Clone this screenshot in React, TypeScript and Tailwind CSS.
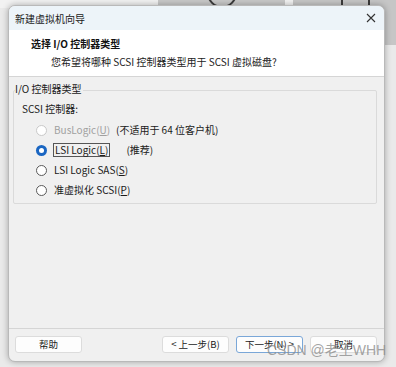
import React from "react";

const font = { fontFamily: '"Noto Sans CJK SC", "Noto Sans", sans-serif' };

function Radio({ state }: { state: "disabled" | "checked" | "normal" }) {
  if (state === "checked")
    return (
      <span className="w-[11px] h-[11px] rounded-full bg-[#1a66c2] flex items-center justify-center shrink-0">
        <span className="w-[5px] h-[5px] rounded-full bg-white" />
      </span>
    );
  return (
    <span
      className={
        "w-[11px] h-[11px] rounded-full bg-white shrink-0 border " +
        (state === "disabled" ? "border-[#c9c9c9] bg-[#f5f5f5]" : "border-[#5a5a5a]")
      }
    />
  );
}

function Btn({ children, focused }: { children: React.ReactNode; focused?: boolean }) {
  return (
    <div
      className={
        "h-[17px] w-[67px] flex items-center justify-center text-[9.5px] text-[#1a1a1a] bg-[#fdfdfd] rounded-[3px] border " +
        (focused ? "border-[#7aa7d8]" : "border-[#dcdcdc]")
      }
    >
      {children}
    </div>
  );
}

export default function App() {
  return (
    <div className="w-[396px] h-[367px] relative overflow-hidden bg-[#eaeaea]" style={font}>
      {/* desktop behind */}
      <div className="absolute left-0 top-0 w-[396px] h-[8px] bg-[#f2f2f2]" />
      <div className="absolute left-[158px] top-0 w-[127px] h-[8px] bg-[#c8c8c8] overflow-hidden">
        <div className="absolute left-[49px] top-[-22px] w-[30px] h-[30px] rounded-full border-[2px] border-[#3c3c3c]" />
      </div>
      <div className="absolute left-[293px] top-0 w-[103px] h-[45px] bg-[#c6c6c6]">
        <div className="absolute left-[48px] top-0 w-[2px] h-[8px] bg-[#3c3c3c]" />
        <div className="absolute left-[75px] top-0 w-[2px] h-[8px] bg-[#3c3c3c]" />
      </div>

      {/* window */}
      <div className="relative ml-[8px] mt-[5px] w-[377px] h-[357px] rounded-[7px] overflow-hidden flex flex-col bg-[#f0f0f0] shadow-[0_0_6px_rgba(0,0,0,0.3)] border border-[#b9b9b9]">
        {/* title bar */}
        <div className="h-[24px] bg-[#edf4f9] flex items-center justify-between pl-[6px] pr-[8px] shrink-0">
          <span className="text-[10px] text-[#1a1a1a]">新建虚拟机向导</span>
          <svg width="10" height="10" viewBox="0 0 10 10">
            <path d="M1 1L9 9M9 1L1 9" stroke="#333" strokeWidth="1.1" />
          </svg>
        </div>
        {/* header */}
        <div className="h-[47px] bg-white border-b border-[#d5d5d5] shrink-0 pl-[22px] pt-[7px]">
          <div className="text-[10px] font-bold text-[#111] leading-[14px]">选择 I/O 控制器类型</div>
          <div className="text-[10px] text-[#222] leading-[14px] mt-[4px] pl-[20px]">
            您希望将哪种 SCSI 控制器类型用于 SCSI 虚拟磁盘?
          </div>
        </div>
        {/* body */}
        <div className="flex-1 pt-[5px] px-[4px]">
          <div className="relative border border-[#dadada] rounded-[2px] h-[114px] mt-[8px] ml-[0px] mr-[3px]">
            <span className="absolute left-[1px] top-[-9px] bg-[#f0f0f0] text-[10px] text-[#1a1a1a] leading-[14px] pr-[2px]">
              I/O 控制器类型
            </span>
            <div className="pt-[11px] pl-[8px] text-[10px] text-[#1a1a1a] leading-[14px]">SCSI 控制器:</div>
            <div className="flex flex-col gap-[6px] pl-[22px] pt-[7px] text-[10px] leading-[14px]">
              <div className="flex items-center">
                <Radio state="disabled" />
                <span className="ml-[7px] w-[62px] text-[#a0a0a0]">
                  BusLogic(<span className="underline">U</span>)
                </span>
                <span className="text-[#1a1a1a]">(不适用于 64 位客户机)</span>
              </div>
              <div className="flex items-center">
                <Radio state="checked" />
                <span className="ml-[6px] mr-[16px] px-[1px] border border-[#555] text-[#1a1a1a] leading-[12px]">
                  LSI Logic(<span className="underline">L</span>)
                </span>
                <span className="text-[#1a1a1a]">(推荐)</span>
              </div>
              <div className="flex items-center">
                <Radio state="normal" />
                <span className="ml-[7px] text-[#1a1a1a]">
                  LSI Logic SAS(<span className="underline">S</span>)
                </span>
              </div>
              <div className="flex items-center">
                <Radio state="normal" />
                <span className="ml-[7px] text-[#1a1a1a]">
                  准虚拟化 SCSI(<span className="underline">P</span>)
                </span>
              </div>
            </div>
          </div>
        </div>
        {/* footer */}
        <div className="h-[33px] border-t border-[#d5d5d5] shrink-0 flex items-center pl-[6px] pr-[7px] pb-[1px]">
          <Btn>帮助</Btn>
          <div className="flex-1" />
          <div className="flex gap-[7px]">
            <Btn>&lt; 上一步(B)</Btn>
            <Btn focused>下一步(N) &gt;</Btn>
            <Btn>取消</Btn>
          </div>
        </div>
      </div>

      {/* watermark */}
      <div
        className="absolute left-[267px] top-[340px] text-[14px] text-[#8c8c8c]/80 whitespace-nowrap"
        style={{ fontFamily: '"Liberation Sans", "Noto Sans CJK SC", sans-serif' }}
      >
        CSDN @老王WHH
      </div>
    </div>
  );
}
